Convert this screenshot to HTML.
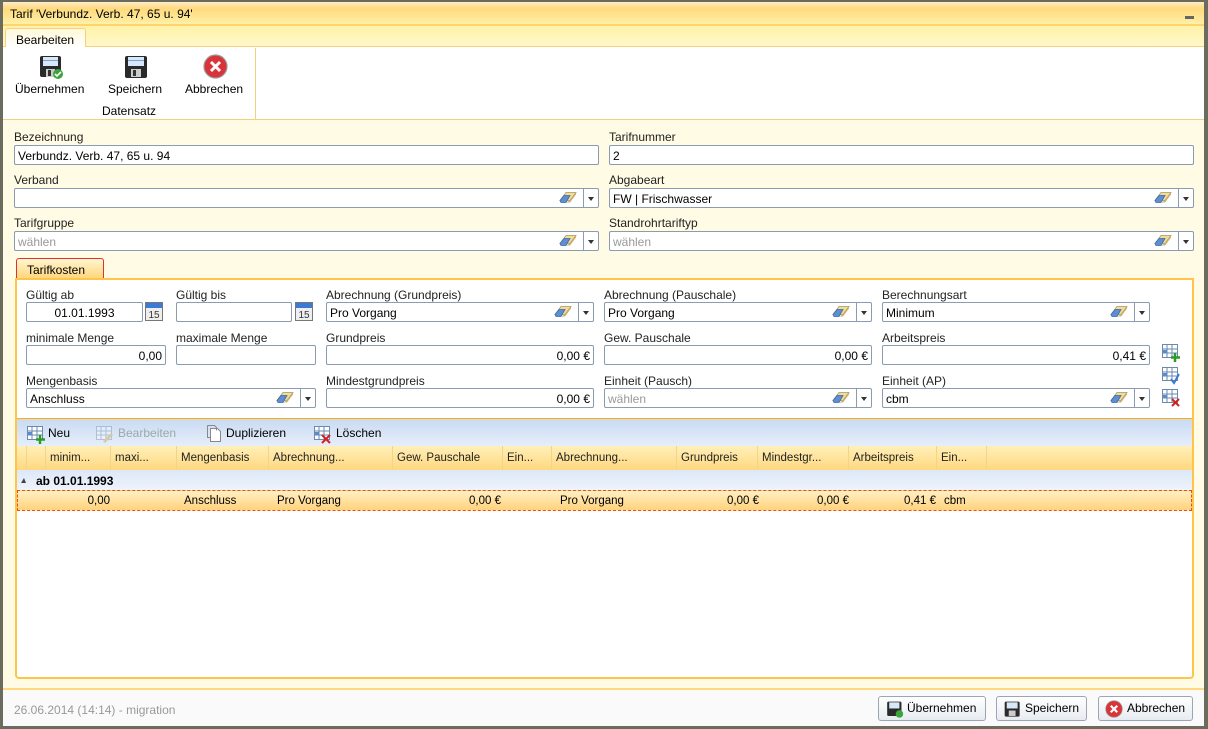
<!DOCTYPE html>
<html><head><meta charset="utf-8">
<style>
*{box-sizing:border-box;margin:0;padding:0}
body{width:1208px;height:729px;overflow:hidden;font-family:"Liberation Sans","DejaVu Sans",sans-serif;font-size:12px;color:#000;background:#6b6b5e;position:relative}
.a{position:absolute}
.win{left:3px;top:2px;width:1201px;height:724px;background:#fffbe4;overflow:hidden}
.lbl{position:absolute;font-size:12px;color:#222;white-space:nowrap}
.in{position:absolute;height:20px;background:#fff;border:1px solid #8a9cb0;border-radius:2px;padding:3px 3px 1px;white-space:nowrap;line-height:14px}
.r{text-align:right}
.gray{color:#999}
.arr{position:absolute;right:0;top:0;width:15px;height:18px;border-left:1px solid #8a9cb0}
.arr:after{content:"";position:absolute;left:4px;top:8px;border-left:3px solid transparent;border-right:3px solid transparent;border-top:4px solid #333}
.er{position:absolute;right:21px;top:2px;width:18px;height:13px}
.cal{position:absolute;width:18px;height:19px;background:linear-gradient(#3b7bd6 0 5px,#eee 5px);border:1px solid #777;font-size:10px;text-align:center;line-height:19px;padding-top:3px;color:#333}
.hdr{position:absolute;top:0;height:24px;line-height:24px;font-size:11.5px;color:#222;border-right:1px solid #f3d58a;padding-left:4px;white-space:nowrap}
.cell{position:absolute;white-space:nowrap;font-size:11.5px;top:4px}
.btn{position:absolute;top:694px;height:25px;border:1px solid #9aa6b6;border-radius:3px;background:linear-gradient(#fff,#e7ebf0);font-size:12px;line-height:23px;padding-left:28px}
</style></head><body>
<svg width="0" height="0" style="position:absolute"><defs><symbol id="e" viewBox="0 0 18 13"><path d="M7 1.5h10l-6 8H1z" fill="#f3dc98" stroke="#a89560" stroke-width=".8"/><path d="M1 9.5l4-5h6l-4 7H2z" fill="#5e8fd0" stroke="#3c6aa8" stroke-width=".8"/><path d="M7 11.5l4-2 6-8v2l-6 8z" fill="#c8b070"/></symbol></defs></svg>
<div class="a win">
  <div class="a" style="left:0;top:0;width:1201px;height:22px;background:linear-gradient(#ffecc8,#ffd97c 30%,#fff0a8);"></div>
  <div class="a" style="left:7px;top:5px;font-size:12px">Tarif 'Verbundz. Verb. 47, 65 u. 94'</div>
  <div class="a" style="left:1182px;top:14px;width:9px;height:3px;background:#666"></div>
  <div class="a" style="left:0;top:22px;width:1201px;height:23px;background:linear-gradient(#fff2a8,#fff8c8);border-top:2px solid #ffd36e;border-bottom:1px solid #f4d180"></div>
  <div class="a" style="left:2px;top:26px;width:81px;height:20px;background:linear-gradient(#fff9d8,#fff);border:1px solid #f4d180;border-bottom:none;border-radius:3px 3px 0 0;padding:4px 0 0 10px">Bearbeiten</div>
  <div class="a" style="left:0;top:45px;width:1201px;height:73px;background:#fff;border-bottom:1px solid #f4d180"></div>
  <div class="a" style="left:252px;top:46px;width:1px;height:71px;background:#f4d180"></div>
  <svg class="a" style="left:36px;top:53px" width="25" height="25" viewBox="0 0 25 25"><rect x="1" y="1" width="21" height="21" rx="2" fill="#2a2a2a"/><rect x="4" y="2" width="15" height="9" fill="#d9e8f8"/><rect x="4" y="5" width="15" height="1" fill="#7aa4d8"/><rect x="7" y="14" width="9" height="8" fill="#ccc"/><rect x="9" y="15" width="3" height="6" fill="#333"/><circle cx="19" cy="19" r="5" fill="#3aa43a"/><path d="M16 19l2 2 4-4" stroke="#fff" stroke-width="1.6" fill="none"/></svg>
  <div class="a" style="left:12px;top:80px">Übernehmen</div>
  <svg class="a" style="left:121px;top:53px" width="25" height="25" viewBox="0 0 25 25"><rect x="1" y="1" width="22" height="22" rx="2" fill="#2a2a2a"/><rect x="4" y="2" width="16" height="9" fill="#d9e8f8"/><rect x="4" y="5" width="16" height="1" fill="#7aa4d8"/><rect x="7" y="14" width="10" height="8" fill="#ccc"/><rect x="9" y="15" width="3" height="6" fill="#333"/></svg>
  <div class="a" style="left:105px;top:80px">Speichern</div>
  <svg class="a" style="left:200px;top:52px" width="25" height="25" viewBox="0 0 25 25"><circle cx="12.5" cy="12.5" r="11.5" fill="#d8343a" stroke="#999" stroke-width="1.2"/><path d="M8 8l9 9M17 8l-9 9" stroke="#fff" stroke-width="3"/></svg>
  <div class="a" style="left:182px;top:80px">Abbrechen</div>
  <div class="a" style="left:99px;top:102px">Datensatz</div>

  <div class="lbl" style="left:11px;top:128px">Bezeichnung</div>
  <div class="in" style="left:11px;top:143px;width:585px">Verbundz. Verb. 47, 65 u. 94</div>
  <div class="lbl" style="left:606px;top:128px">Tarifnummer</div>
  <div class="in" style="left:606px;top:143px;width:585px">2</div>
  <div class="lbl" style="left:11px;top:171px">Verband</div>
  <div class="in" style="left:11px;top:186px;width:585px"><svg class="er"><use href="#e"/></svg><span class="arr"></span></div>
  <div class="lbl" style="left:606px;top:171px">Abgabeart</div>
  <div class="in" style="left:606px;top:186px;width:585px">FW | Frischwasser<svg class="er"><use href="#e"/></svg><span class="arr"></span></div>
  <div class="lbl" style="left:11px;top:214px">Tarifgruppe</div>
  <div class="in gray" style="left:11px;top:229px;width:585px">wählen<svg class="er"><use href="#e"/></svg><span class="arr"></span></div>
  <div class="lbl" style="left:606px;top:214px">Standrohrtariftyp</div>
  <div class="in gray" style="left:606px;top:229px;width:585px">wählen<svg class="er"><use href="#e"/></svg><span class="arr"></span></div>

  <div class="a" style="left:13px;top:256px;width:88px;height:21px;background:linear-gradient(#fff6d0,#ffd57a);border:1px solid #e03030;border-bottom:none;border-radius:3px 3px 0 0;padding:4px 0 0 10px">Tarifkosten</div>
  <div class="a" style="left:12px;top:276px;width:1179px;height:401px;background:#fff;border:2px solid #ffc54a;border-radius:0 0 4px 4px"></div>

  <div class="lbl" style="left:23px;top:286px">Gültig ab</div>
  <div class="in" style="left:23px;top:300px;width:117px;text-align:center">01.01.1993</div>
  <div class="cal" style="left:142px;top:300px">15</div>
  <div class="lbl" style="left:173px;top:286px">Gültig bis</div>
  <div class="in" style="left:173px;top:300px;width:116px"></div>
  <div class="cal" style="left:292px;top:300px">15</div>
  <div class="lbl" style="left:323px;top:286px">Abrechnung (Grundpreis)</div>
  <div class="in" style="left:323px;top:300px;width:268px">Pro Vorgang<svg class="er"><use href="#e"/></svg><span class="arr"></span></div>
  <div class="lbl" style="left:601px;top:286px">Abrechnung (Pauschale)</div>
  <div class="in" style="left:601px;top:300px;width:268px">Pro Vorgang<svg class="er"><use href="#e"/></svg><span class="arr"></span></div>
  <div class="lbl" style="left:879px;top:286px">Berechnungsart</div>
  <div class="in" style="left:879px;top:300px;width:268px">Minimum<svg class="er"><use href="#e"/></svg><span class="arr"></span></div>

  <div class="lbl" style="left:23px;top:329px">minimale Menge</div>
  <div class="in r" style="left:23px;top:343px;width:140px">0,00</div>
  <div class="lbl" style="left:173px;top:329px">maximale Menge</div>
  <div class="in" style="left:173px;top:343px;width:140px"></div>
  <div class="lbl" style="left:323px;top:329px">Grundpreis</div>
  <div class="in r" style="left:323px;top:343px;width:268px">0,00 €</div>
  <div class="lbl" style="left:601px;top:329px">Gew. Pauschale</div>
  <div class="in r" style="left:601px;top:343px;width:268px">0,00 €</div>
  <div class="lbl" style="left:879px;top:329px">Arbeitspreis</div>
  <div class="in r" style="left:879px;top:343px;width:268px">0,41 €</div>

  <div class="lbl" style="left:23px;top:372px">Mengenbasis</div>
  <div class="in" style="left:23px;top:386px;width:290px">Anschluss<svg class="er"><use href="#e"/></svg><span class="arr"></span></div>
  <div class="lbl" style="left:323px;top:372px">Mindestgrundpreis</div>
  <div class="in r" style="left:323px;top:386px;width:268px">0,00 €</div>
  <div class="lbl" style="left:601px;top:372px">Einheit (Pausch)</div>
  <div class="in gray" style="left:601px;top:386px;width:268px">wählen<svg class="er"><use href="#e"/></svg><span class="arr"></span></div>
  <div class="lbl" style="left:879px;top:372px">Einheit (AP)</div>
  <div class="in" style="left:879px;top:386px;width:268px">cbm<svg class="er"><use href="#e"/></svg><span class="arr"></span></div>

  <svg class="a" style="left:1159px;top:342px" width="18" height="18"><rect x="0.5" y="0.5" width="15" height="13" fill="#fff" stroke="#6a8ab0"/><path d="M0 5h16M0 9h16M5 0v14M10 0v14" stroke="#6a8ab0"/><rect x="1" y="6" width="4" height="3" fill="#5a8ad0"/><path d="M13 9v9M9 13.5h9" stroke="#2a9a2a" stroke-width="2.5"/></svg>
  <svg class="a" style="left:1159px;top:365px" width="18" height="18"><rect x="0.5" y="0.5" width="15" height="13" fill="#fff" stroke="#6a8ab0"/><path d="M0 5h16M0 9h16M5 0v14M10 0v14" stroke="#6a8ab0"/><rect x="1" y="6" width="4" height="3" fill="#5a8ad0"/><path d="M9 12l3 4 5-9" stroke="#3a7ad0" stroke-width="2" fill="none"/></svg>
  <svg class="a" style="left:1159px;top:387px" width="18" height="18"><rect x="0.5" y="0.5" width="15" height="13" fill="#fff" stroke="#6a8ab0"/><path d="M0 5h16M0 9h16M5 0v14M10 0v14" stroke="#6a8ab0"/><rect x="1" y="6" width="4" height="3" fill="#5a8ad0"/><path d="M10 10l7 7M17 10l-7 7" stroke="#d02020" stroke-width="2"/></svg>

  <div class="a" style="left:14px;top:416px;width:1175px;height:28px;background:linear-gradient(#c9daf2,#e6eefa);border-top:1px solid #ffb000"></div>
  <svg class="a" style="left:24px;top:424px" width="18" height="18"><rect x="0.5" y="0.5" width="15" height="13" fill="#fff" stroke="#6a8ab0"/><path d="M0 5h16M0 9h16M5 0v14M10 0v14" stroke="#6a8ab0"/><rect x="1" y="6" width="4" height="3" fill="#5a8ad0"/><path d="M13 9v9M9 13.5h9" stroke="#2a9a2a" stroke-width="2.5"/></svg>
  <div class="a" style="left:45px;top:424px">Neu</div>
  <svg class="a" style="left:93px;top:424px;opacity:.4" width="18" height="18"><rect x="0.5" y="0.5" width="15" height="13" fill="#fff" stroke="#6a8ab0"/><path d="M0 5h16M0 9h16M5 0v14M10 0v14" stroke="#6a8ab0"/><path d="M8 16l8-8" stroke="#c8a040" stroke-width="3"/></svg>
  <div class="a" style="left:115px;top:424px;color:#9aa">Bearbeiten</div>
  <svg class="a" style="left:203px;top:423px" width="16" height="18"><path d="M4.5 3.5h7l3 3v10h-10z" fill="#fff" stroke="#888"/><path d="M1.5 0.5h7l2 2v3M1.5 0.5v12h3" fill="none" stroke="#888"/></svg>
  <div class="a" style="left:223px;top:424px">Duplizieren</div>
  <svg class="a" style="left:311px;top:424px" width="18" height="18"><rect x="0.5" y="0.5" width="15" height="13" fill="#fff" stroke="#6a8ab0"/><path d="M0 5h16M0 9h16M5 0v14M10 0v14" stroke="#6a8ab0"/><rect x="1" y="6" width="4" height="3" fill="#5a8ad0"/><path d="M8 9l8 8M16 9l-8 8" stroke="#d02020" stroke-width="2"/></svg>
  <div class="a" style="left:333px;top:424px">Löschen</div>

  <div class="a" style="left:14px;top:444px;width:1175px;height:24px;background:linear-gradient(#fff0b8,#ffd880)">
    <div class="hdr" style="left:0;width:10px"></div>
    <div class="hdr" style="left:10px;width:19px"></div>
    <div class="hdr" style="left:29px;width:65px">minim...</div>
    <div class="hdr" style="left:94px;width:66px">maxi...</div>
    <div class="hdr" style="left:160px;width:92px">Mengenbasis</div>
    <div class="hdr" style="left:252px;width:124px">Abrechnung...</div>
    <div class="hdr" style="left:376px;width:110px">Gew. Pauschale</div>
    <div class="hdr" style="left:486px;width:49px">Ein...</div>
    <div class="hdr" style="left:535px;width:125px">Abrechnung...</div>
    <div class="hdr" style="left:660px;width:81px">Grundpreis</div>
    <div class="hdr" style="left:741px;width:91px">Mindestgr...</div>
    <div class="hdr" style="left:832px;width:88px">Arbeitspreis</div>
    <div class="hdr" style="left:920px;width:50px">Ein...</div>
  </div>
  <div class="a" style="left:14px;top:468px;width:1175px;height:20px;background:linear-gradient(#dde8f8,#eef3fc)"></div>
  <div class="a" style="left:18px;top:476px;border-left:3px solid transparent;border-bottom:5px solid #444;border-right:2px solid transparent;width:0"></div>
  <div class="a" style="left:33px;top:472px;font-weight:bold;font-size:12px">ab 01.01.1993</div>
  <div class="a" style="left:14px;top:488px;width:1175px;height:21px;background:linear-gradient(#fff0c4,#ffd27c);border:1px dashed #e8501a">
    <div class="cell r" style="left:0;width:92px">0,00</div>
    <div class="cell" style="left:166px">Anschluss</div>
    <div class="cell" style="left:259px">Pro Vorgang</div>
    <div class="cell r" style="left:376px;width:107px">0,00 €</div>
    <div class="cell" style="left:542px">Pro Vorgang</div>
    <div class="cell r" style="left:660px;width:81px">0,00 €</div>
    <div class="cell r" style="left:741px;width:90px">0,00 €</div>
    <div class="cell r" style="left:832px;width:86px">0,41 €</div>
    <div class="cell" style="left:926px">cbm</div>
  </div>

  <div class="a" style="left:0;top:686px;width:1201px;height:40px;background:#fafafa;border-top:2px solid #ffd880"></div>
  <div class="a" style="left:11px;top:701px;color:#999;font-size:12px">26.06.2014 (14:14) - migration</div>
  <div class="btn" style="left:875px;width:108px">Übernehmen</div>
  <svg class="a" style="left:883px;top:699px" width="18" height="17" viewBox="0 0 25 25"><rect x="1" y="1" width="21" height="21" rx="2" fill="#2a2a2a"/><rect x="4" y="2" width="15" height="9" fill="#d9e8f8"/><circle cx="19" cy="19" r="5.5" fill="#3aa43a"/></svg>
  <div class="btn" style="left:993px;width:91px">Speichern</div>
  <svg class="a" style="left:1001px;top:699px" width="17" height="17" viewBox="0 0 25 25"><rect x="1" y="1" width="22" height="22" rx="2" fill="#2a2a2a"/><rect x="4" y="2" width="16" height="9" fill="#d9e8f8"/><rect x="7" y="14" width="10" height="8" fill="#ccc"/></svg>
  <div class="btn" style="left:1095px;width:95px">Abbrechen</div>
  <svg class="a" style="left:1102px;top:698px" width="18" height="18" viewBox="0 0 25 25"><circle cx="12.5" cy="12.5" r="11.5" fill="#d8343a" stroke="#999"/><path d="M8 8l9 9M17 8l-9 9" stroke="#fff" stroke-width="3"/></svg>
</div>
</body></html>
